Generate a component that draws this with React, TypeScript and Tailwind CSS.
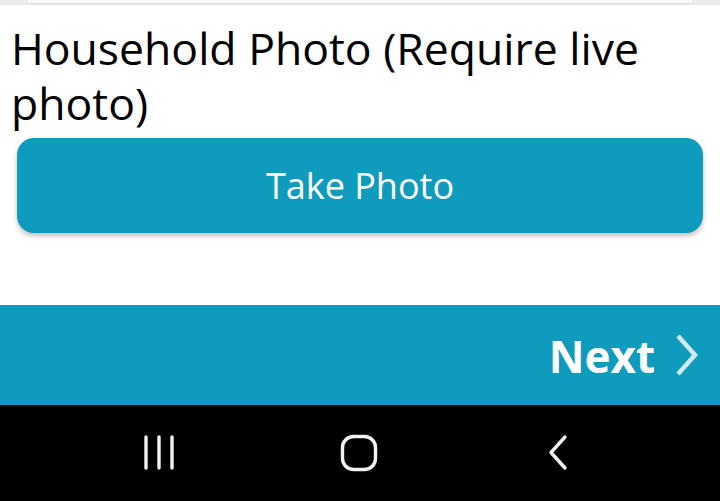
function NavBar() {
    return (
        <div className="h-[96px] bg-black flex items-center justify-between px-[140px]">
            <svg width="40" height="40" viewBox="0 0 40 40">
                <g stroke="#f2f2f2" strokeWidth="3.4" strokeLinecap="round">
                    <line x1="6" y1="4" x2="6" y2="35" />
                    <line x1="19" y1="4" x2="19" y2="35" />
                    <line x1="32" y1="4" x2="32" y2="35" />
                </g>
            </svg>
            <svg width="40" height="40" viewBox="0 0 40 40">
                <rect x="3.5" y="3.5" width="33" height="33" rx="11" fill="none" stroke="#f2f2f2" strokeWidth="3.4" />
            </svg>
            <svg width="40" height="40" viewBox="0 0 40 40" className="mr-[2px]">
                <polyline points="27,4 13,19.5 27,35" fill="none" stroke="#f2f2f2" strokeWidth="3.4" strokeLinecap="round" strokeLinejoin="round" />
            </svg>
        </div>
    );
}

export default function App() {
    return (
        <div className="w-[720px] h-[501px] flex flex-col bg-white overflow-hidden" style={{ fontFamily: '"Open Sans", "Noto Sans", sans-serif' }}>
            <div className="h-[5px] bg-[#ececec] flex">
                <div className="mx-[28px] flex-1 h-[3px] bg-[#f7f7f7] shadow-[0_1px_3px_rgba(0,0,0,0.08)]" />
            </div>
            <div className="flex-1 flex flex-col pl-[11px] pr-[12px]">
                <h1 className="text-[44.5px] leading-[55px] text-black mt-[15px]">
                    Household Photo (Require live photo)
                </h1>
                <button className="mt-[8px] ml-[6px] mr-[5px] h-[95px] rounded-[17px] bg-[#0f9bbe] text-white text-[36px] shadow-[0_3px_5px_rgba(0,0,0,0.25)]">
                    Take Photo
                </button>
            </div>
            <div className="h-[100px] bg-[#0f9bbe] flex items-center justify-end pr-[20px]">
                <span className="text-white font-bold text-[44px] mr-[19px] mt-[1px]">Next</span>
                <svg width="26" height="44" viewBox="0 0 26 44">
                    <polyline points="4,3 21,22 4,41" fill="none" stroke="#cfeaf2" strokeWidth="4.5" strokeLinejoin="miter" />
                </svg>
            </div>
            <NavBar />
        </div>
    );
}
